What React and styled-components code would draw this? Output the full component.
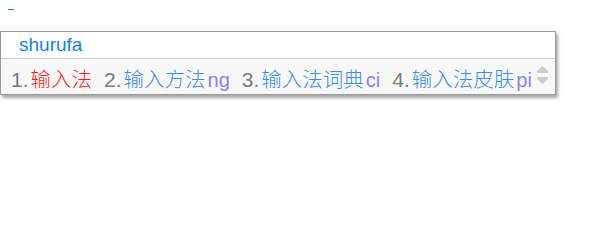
import React from 'react';
import styled, { createGlobalStyle } from 'styled-components';

const GlobalStyle = createGlobalStyle`
  html, body {
    margin: 0;
    padding: 0;
    background: #ffffff;
  }
  body {
    font-family: "Liberation Sans", "Noto Sans CJK SC", sans-serif;
  }
`;

const candidates = [
  { word: '输入法', comment: '' },
  { word: '输入方法', comment: 'ng' },
  { word: '输入法词典', comment: 'ci' },
  { word: '输入法皮肤', comment: 'pi' },
];

const App = () => {
  return (
    <Page>
      <GlobalStyle />
      <Caret />
      <Panel>
        <Preedit>shurufa</Preedit>
        <CandidateRow>
          {candidates.map((c, i) => (
            <Candidate key={i}>
              <Index>{i + 1}.</Index>
              <Word highlighted={i === 0}>{c.word}</Word>
              {c.comment && <Comment>{c.comment}</Comment>}
            </Candidate>
          ))}
          <Pager>
            <svg width="11" height="19" viewBox="0 0 11 19">
              <path d="M5.5 0 L11 5 L11 7 L0 7 L0 5 Z" fill="#cdcdcd" />
              <path d="M0 11 L11 11 L11 13 L5.5 18 L0 13 Z" fill="#cdcdcd" />
            </svg>
          </Pager>
        </CandidateRow>
      </Panel>
    </Page>
  );
};

export default App;

const Page = styled.div`
  width: 600px;
  height: 248px;
  padding-top: 9px;
  box-sizing: border-box;
`;

const Caret = styled.div`
  width: 6px;
  height: 1px;
  margin-left: 8px;
  background: #1a78e6;
`;

const Panel = styled.div`
  width: 556px;
  margin-top: 21px;
  box-sizing: border-box;
  border: 1px solid #9a9a9a;
  background: #ffffff;
  box-shadow: 2px 3px 3px rgba(0, 0, 0, 0.35);
`;

const Preedit = styled.div`
  height: 26px;
  line-height: 26px;
  padding-left: 18px;
  font-size: 19px;
  color: #1580f0;
  border-bottom: 1px solid #cfcfcf;
`;

const CandidateRow = styled.div`
  display: flex;
  align-items: center;
  height: 35px;
  box-sizing: border-box;
  padding: 2px 0 0 10px;
  background: #f8f8f8;
  font-size: 20px;
  white-space: nowrap;
`;

const Candidate = styled.div`
  display: flex;
  align-items: baseline;

  & + & {
    margin-left: 12px;
  }
`;

const Index = styled.span`
  color: #7a7a7a;
  font-size: 21px;
  margin-right: 2px;
`;

const Word = styled.span`
  color: ${(p) => (p.highlighted ? '#ff1a1a' : '#3a8cf2')};
  font-family: "Noto Sans CJK SC", sans-serif;
  font-size: 20.5px;
  font-weight: 300;
`;

const Comment = styled.span`
  color: #8a7ff4;
  margin-left: 2px;
`;

const Pager = styled.div`
  display: flex;
  margin-left: auto;
  margin-right: 7px;
  margin-top: -5px;
`;
